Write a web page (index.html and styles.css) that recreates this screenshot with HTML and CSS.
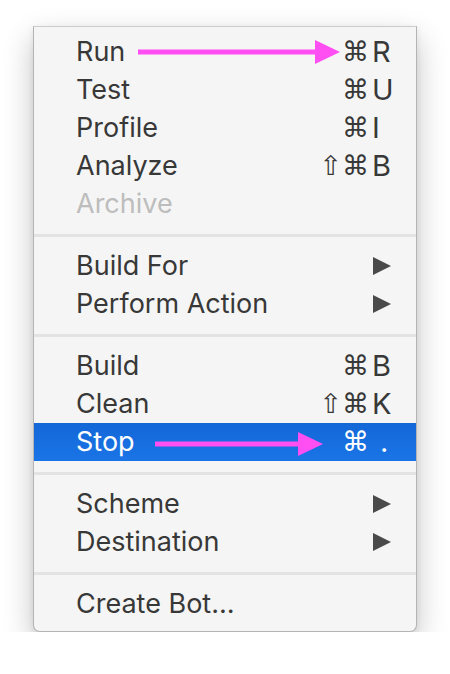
FILE: index.html
```html
<!DOCTYPE html>
<html>
<head>
<meta charset="utf-8">
<link rel="stylesheet" href="styles.css">
</head>
<body>
<div class="menu">
  <div class="item"><span class="label">Run</span><span class="mods">⌘</span><span class="key">R</span>
    <svg class="arrow arrow-run" width="202" height="24" viewBox="0 0 202 24"><rect x="0" y="9.5" width="180" height="5" fill="#ff4ff3"/><polygon points="177,0 202,12 177,24" fill="#ff4ff3"/></svg>
  </div>
  <div class="item"><span class="label">Test</span><span class="mods">⌘</span><span class="key">U</span></div>
  <div class="item"><span class="label">Profile</span><span class="mods">⌘</span><span class="key">I</span></div>
  <div class="item"><span class="label">Analyze</span><span class="mods">⇧⌘</span><span class="key">B</span></div>
  <div class="item disabled"><span class="label">Archive</span></div>
  <div class="sep"></div>
  <div class="item"><span class="label">Build For</span><span class="key"><span class="tri"></span></span></div>
  <div class="item"><span class="label">Perform Action</span><span class="key"><span class="tri"></span></span></div>
  <div class="sep"></div>
  <div class="item"><span class="label">Build</span><span class="mods">⌘</span><span class="key">B</span></div>
  <div class="item"><span class="label">Clean</span><span class="mods">⇧⌘</span><span class="key">K</span></div>
  <div class="item selected"><span class="label">Stop</span><span class="mods">⌘</span><span class="key key-dot">.</span>
    <svg class="arrow arrow-stop" width="168" height="24" viewBox="0 0 168 24"><rect x="0" y="9.5" width="146" height="5" fill="#ff4ff3"/><polygon points="143,0 168,12 143,24" fill="#ff4ff3"/></svg>
  </div>
  <div class="sep"></div>
  <div class="item"><span class="label">Scheme</span><span class="key"><span class="tri"></span></span></div>
  <div class="item"><span class="label">Destination</span><span class="key"><span class="tri"></span></span></div>
  <div class="sep"></div>
  <div class="item"><span class="label">Create Bot…</span></div>
</div>
</body>
</html>
```

FILE: styles.css
```css
html, body {
  margin: 0;
  padding: 0;
  background: #ffffff;
}

body {
  font-family: "Inter", "DejaVu Sans", sans-serif;
}

.menu {
  box-sizing: border-box;
  width: 384px;
  margin: 26px 0 0 33px;
  padding: 6px 0 8px;
  background: #f5f5f5;
  border: 1px solid #b4b4b4;
  border-top-color: #cdcdcd;
  border-radius: 0 0 7px 7px;
  box-shadow: 0 12px 30px rgba(0, 0, 0, 0.24), 0 2px 6px rgba(0, 0, 0, 0.08);
}

.item {
  position: relative;
  display: grid;
  grid-template-columns: 1fr auto 26px;
  align-items: center;
  height: 38px;
  padding: 0 18px 0 42px;
  font-size: 27px;
  line-height: 38px;
  color: #383838;
}

.label {
  grid-column: 1;
}

.mods {
  grid-column: 2;
  text-align: right;
  font-family: "DejaVu Sans", sans-serif;
  font-size: 27px;
  margin-right: 3px;
}

.key {
  grid-column: 3;
  display: flex;
  align-items: center;
  font-size: 29px;
}

.key-dot {
  padding-left: 8px;
}

.disabled {
  color: #bdbdbd;
}

.selected {
  background: linear-gradient(#1467d7, #1a75e7);
  color: #ffffff;
}

.sep {
  height: 3px;
  margin: 11px 0 10px;
  background: #e3e3e3;
}

.tri {
  display: block;
  width: 0;
  height: 0;
  margin-left: 1px;
  border-left: 18px solid #4a4a4a;
  border-top: 9.5px solid transparent;
  border-bottom: 9.5px solid transparent;
}

.arrow {
  position: absolute;
  display: block;
}

.arrow-run {
  left: 104px;
  top: 7px;
}

.arrow-stop {
  left: 121px;
  top: 9px;
}
```
